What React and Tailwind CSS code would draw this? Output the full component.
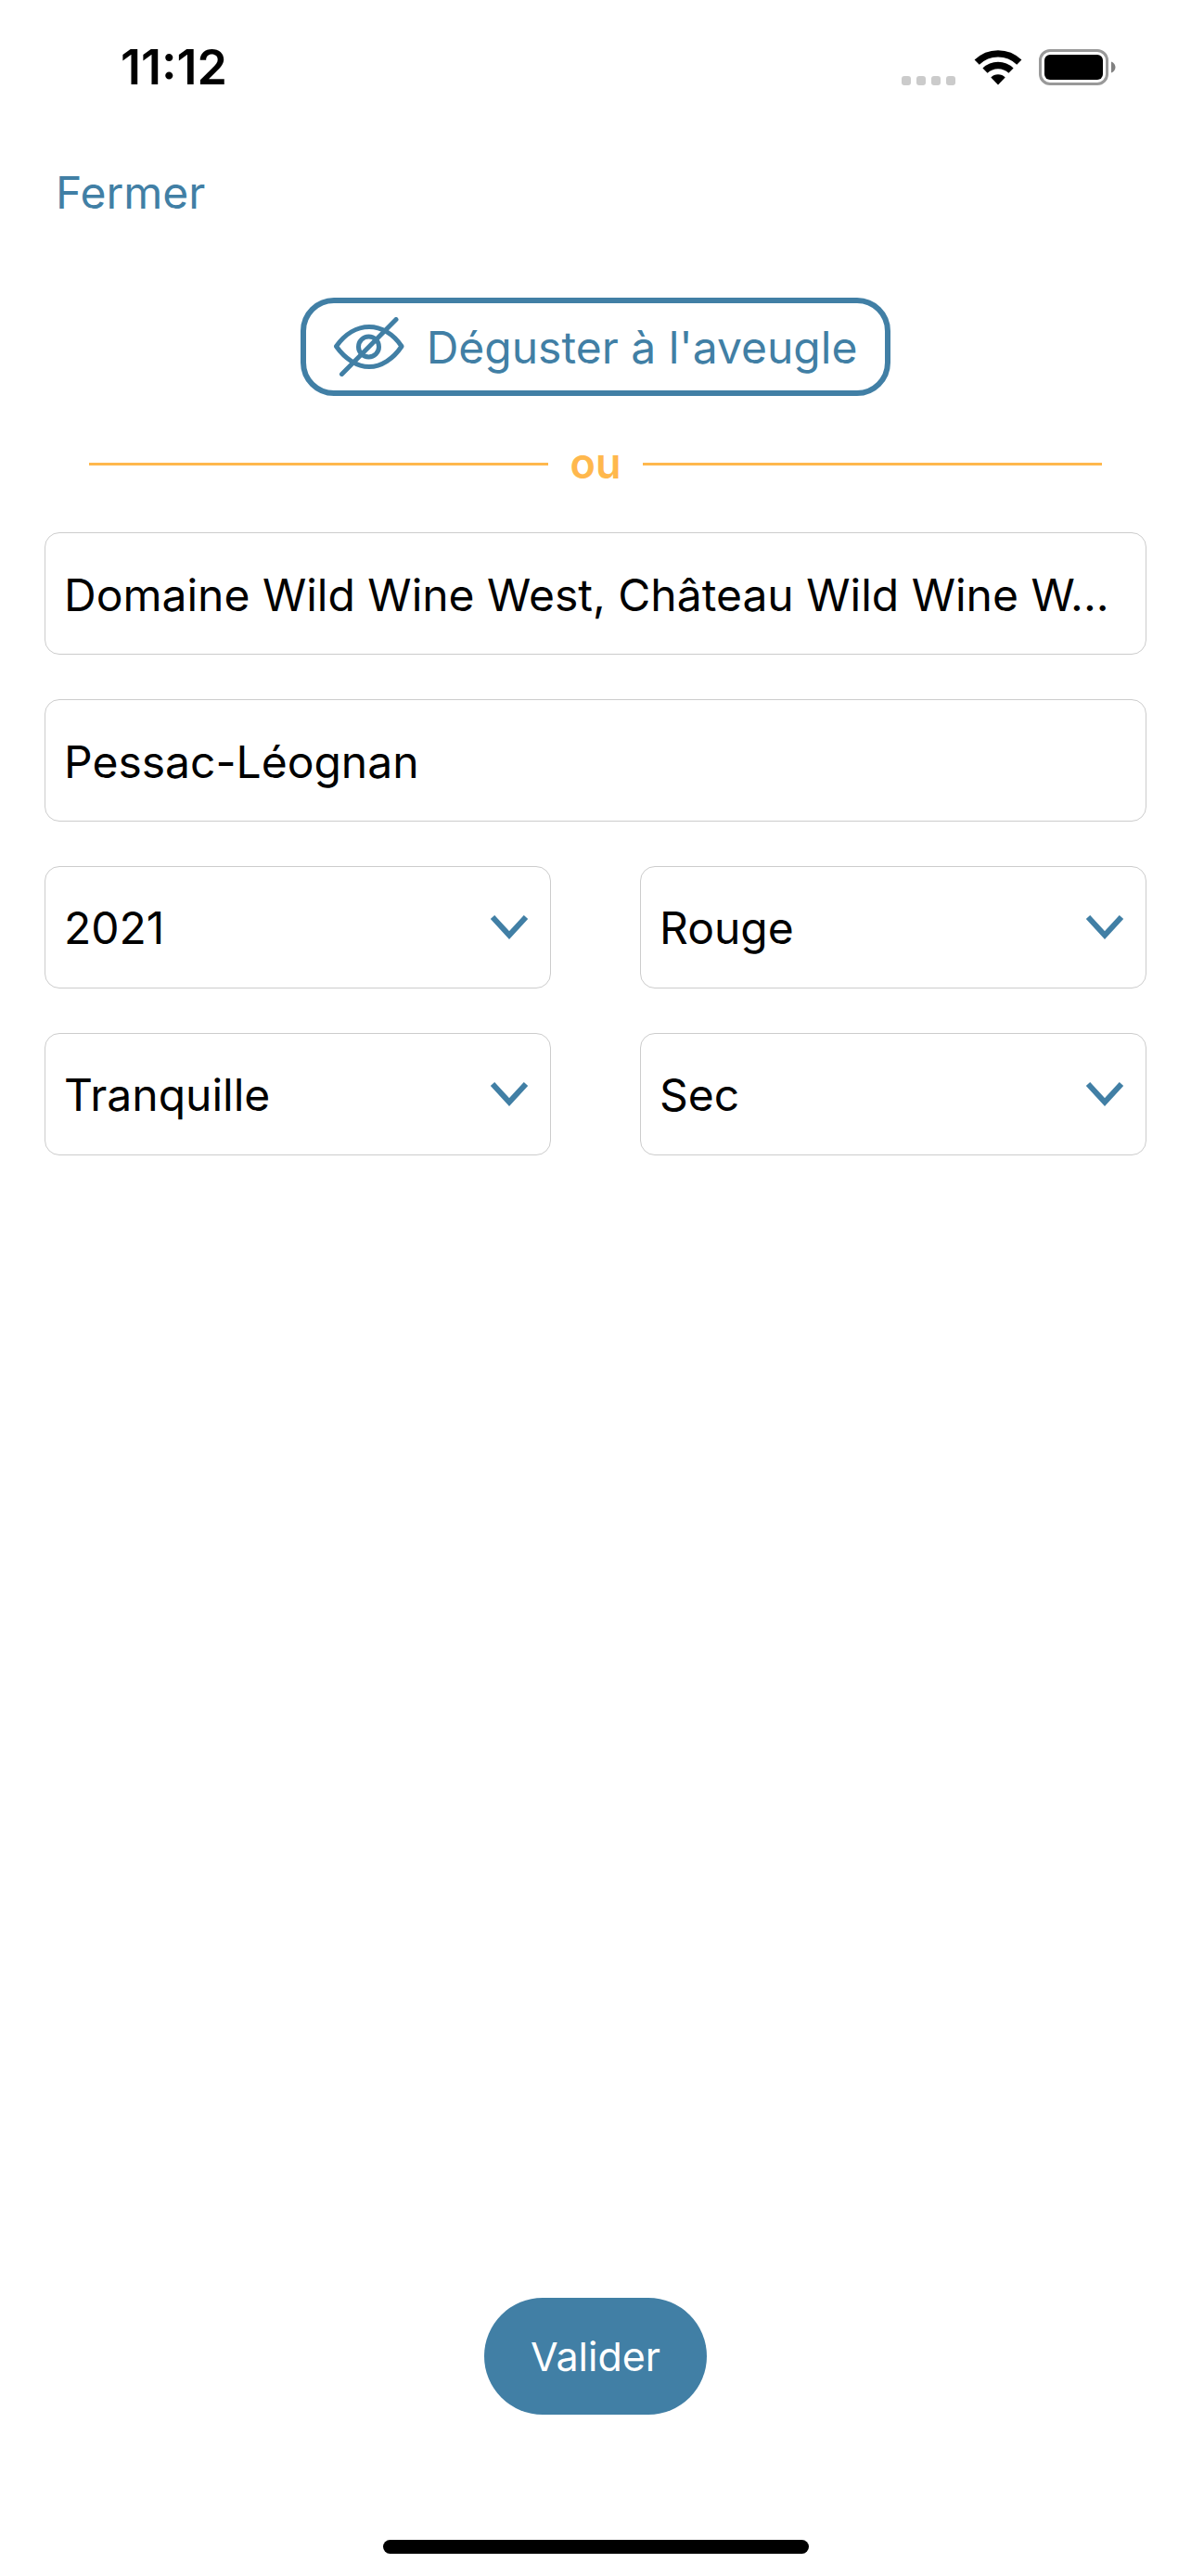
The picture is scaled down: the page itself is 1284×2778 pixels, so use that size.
import { useState } from "react";

function StatusBar() {
  return (
    <header className="flex h-[146px] items-center justify-between pl-[130px] pr-[80px]">
      <time className="text-[52px] leading-[60px] font-semibold text-black">11:12</time>
      <div className="flex items-center">
        <div className="mt-7 mr-5 flex gap-[6px]" aria-hidden="true">
          <span className="size-[10px] rounded-[3px] bg-[#cbcbcb]" />
          <span className="size-[10px] rounded-[3px] bg-[#cbcbcb]" />
          <span className="size-[10px] rounded-[3px] bg-[#cbcbcb]" />
          <span className="size-[10px] rounded-[3px] bg-[#cbcbcb]" />
        </div>
        <svg className="mr-[18px] h-[38px] w-[52px]" viewBox="0 0 52 38" fill="none" aria-hidden="true">
          <path d="M3.2 13.2A32.5 32.5 0 0 1 48.8 13.2" stroke="#000" strokeWidth="7.4" />
          <path d="M12 22.2A20 20 0 0 1 40 22.2" stroke="#000" strokeWidth="7.4" />
          <path d="M26 37.5L18.3 29.6A10.8 10.8 0 0 1 33.7 29.6Z" fill="#000" />
        </svg>
        <svg className="h-[40px] w-[84px]" viewBox="0 0 84 40" fill="none" aria-hidden="true">
          <rect x="1.5" y="1.5" width="72" height="36" rx="10.5" stroke="#999" strokeWidth="3" />
          <rect x="6" y="6" width="63" height="27" rx="6" fill="#000" />
          <path d="M78 13.5C84 15.5 84 23.5 78 25.5Z" fill="#808080" />
        </svg>
      </div>
    </header>
  );
}

function BlindIcon() {
  return (
    <svg
      className="h-[64px] w-[76px] shrink-0"
      viewBox="0 0 76 64"
      fill="none"
      stroke="currentColor"
      strokeWidth="5"
      strokeLinecap="round"
      strokeLinejoin="round"
      aria-hidden="true"
    >
      <path d="M2.5 31.5C12 18 25 10.500 38 10.500S64 18 73 31.500C64 45 51 53.500 38 53.500S12 45 2.500 31.500Z" />
      <circle cx="37.500" cy="32" r="11" />
      <path d="M8.500 61.500L67 2.500" />
    </svg>
  );
}

function TextField({ label, value, onChange }) {
  return (
    <input
      aria-label={label}
      type="text"
      value={value}
      onChange={(e) => onChange(e.target.value)}
      className="block h-[132px] w-full rounded-[16px] border border-[#ccc] bg-white pt-0.5 pr-4 pl-5 text-[48px] text-black"
    />
  );
}

function SelectField({ label, options }) {
  return (
    <div className="relative">
      <select
        aria-label={label}
        className="block h-[132px] w-full appearance-none rounded-[16px] border border-[#ccc] bg-white pt-0.5 pr-[96px] pl-5 text-[48px] text-black"
      >
        {options.map((option) => (
          <option key={option}>{option}</option>
        ))}
      </select>
      <svg
        className="pointer-events-none absolute top-[53px] right-6 h-[27px] w-[42px]"
        viewBox="0 0 42 27"
        fill="none"
        stroke="#417fa5"
        strokeWidth="6"
        aria-hidden="true"
      >
        <path d="M3 2L21 21.500L39 2" />
      </svg>
    </div>
  );
}

export default function App() {
  const [estate, setEstate] = useState("Domaine Wild Wine West, Château Wild Wine W...");
  const [appellation, setAppellation] = useState("Pessac-Léognan");

  return (
    <div className="flex min-h-screen flex-col bg-white font-[Inter,'Liberation_Sans',sans-serif]">
      <StatusBar />
      <nav className="px-[60px] pt-8">
        <button type="button" className="block text-[48px] leading-[60px] text-[#417fa5]">Fermer</button>
      </nav>
      <main className="flex flex-1 flex-col px-12 pt-[83px]">
        <button
          type="button"
          className="flex h-[106px] items-center gap-6 self-center rounded-[36px] border-[6px] border-[#417fa5] px-[30px] text-[48px] text-[#417fa5]"
        >
          <BlindIcon />
          <span className="pt-0.5">Déguster à l'aveugle</span>
        </button>
        <div className="mt-[43px] flex items-center gap-6 px-12">
          <span className="h-[3px] flex-1 bg-[#ffb84d]" />
          <span className="text-[45px] leading-[60px] font-semibold text-[#ffb84d]">ou</span>
          <span className="h-[3px] flex-1 bg-[#ffb84d]" />
        </div>
        <form id="wine" className="mt-[44px] flex flex-col gap-12" onSubmit={(e) => e.preventDefault()}>
          <TextField label="Domaine" value={estate} onChange={setEstate} />
          <TextField label="Appellation" value={appellation} onChange={setAppellation} />
          <div className="grid grid-cols-2 gap-x-24 gap-y-12">
            <SelectField label="Millésime" options={["2021", "2020", "2019"]} />
            <SelectField label="Couleur" options={["Rouge", "Blanc", "Rosé"]} />
            <SelectField label="Type" options={["Tranquille", "Effervescent"]} />
            <SelectField label="Sucrosité" options={["Sec", "Demi-sec", "Doux"]} />
          </div>
        </form>
      </main>
      <footer className="flex flex-col items-center pb-6">
        <button
          type="submit"
          form="wine"
          className="h-[126px] rounded-[63px] bg-[#417fa5] px-[50px] text-[43px] text-white"
        >
          Valider
        </button>
        <div className="mt-[135px] h-[15px] w-[459px] rounded-full bg-black" />
      </footer>
    </div>
  );
}
